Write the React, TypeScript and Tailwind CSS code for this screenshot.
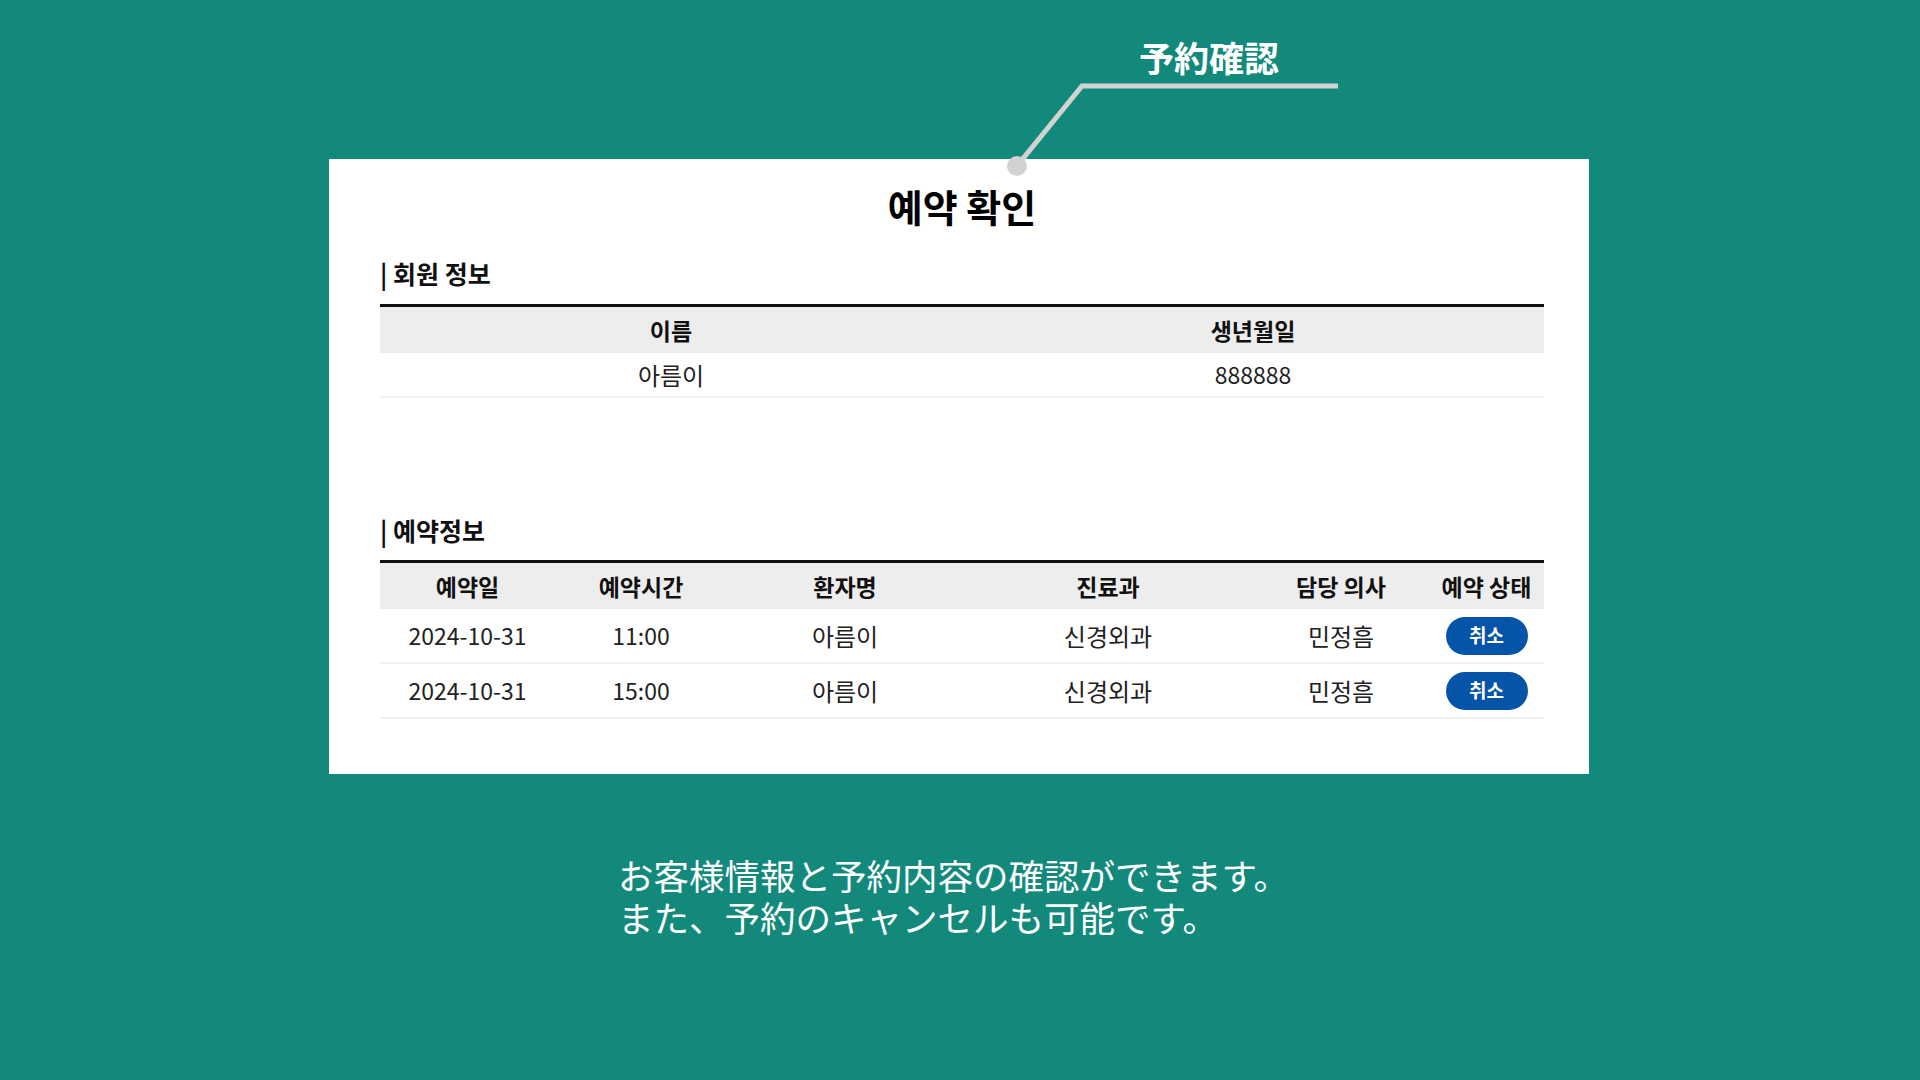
const memberCols = ["이름", "생년월일"];

const reservationCols = [
  { label: "예약일", w: "w-[175px]" },
  { label: "예약시간", w: "w-[172px]" },
  { label: "환자명", w: "w-[236px]" },
  { label: "진료과", w: "w-[290px]" },
  { label: "담당 의사", w: "w-[176px]" },
  { label: "예약 상태", w: "w-[115px]" },
];

const reservations = [
  { date: "2024-10-31", time: "11:00", name: "아름이", dept: "신경외과", doctor: "민정흠" },
  { date: "2024-10-31", time: "15:00", name: "아름이", dept: "신경외과", doctor: "민정흠" },
];

function SectionLabel({ children }: { children: string }) {
  return (
    <h2 className="text-[25px] leading-[30px] font-bold text-[#111]">| {children}</h2>
  );
}

export default function App() {
  return (
    <div className="relative h-[1080px] w-full overflow-hidden bg-[#13897c] font-['Noto_Sans_CJK_KR',sans-serif]">
      {/* callout */}
      <svg className="absolute left-0 top-0 z-10" width="1920" height="200" viewBox="0 0 1920 200">
        <polyline points="1017,166 1082,86 1338,86" fill="none" stroke="#d2d2d2" strokeWidth="5" />
        <circle cx="1017" cy="166" r="10" fill="#d2d2d2" />
      </svg>
      <p className="absolute left-[1139px] top-[37px] z-10 text-[35px] leading-[40px] font-bold text-white font-['Noto_Sans_CJK_JP',sans-serif]">
        予約確認
      </p>

      <div className="pt-[159px] pl-[329px]">
        <div className="h-[615px] w-[1260px] bg-white pl-[51px] pr-[45px] pt-[25px]">
          <h1 className="text-center text-[38px] leading-[44px] font-bold text-black">예약 확인</h1>

          <div className="mt-[30px]">
            <SectionLabel>회원 정보</SectionLabel>
            <div className="mt-[16px] border-t-[3px] border-[#111]">
              <div className="grid grid-cols-2 bg-[#ededed] h-[46px] items-center text-[23px] font-bold text-[#111]">
                {memberCols.map((c) => (
                  <div key={c} className="text-center">{c}</div>
                ))}
              </div>
              <div className="grid grid-cols-2 h-[45px] items-center border-b-2 border-[#f0f0f0] text-[24px] text-[#222]">
                <div className="text-center">아름이</div>
                <div className="text-center text-[23px]">888888</div>
              </div>
            </div>
          </div>

          <div className="mt-[117px]">
            <SectionLabel>예약정보</SectionLabel>
            <div className="mt-[15px] border-t-[3px] border-[#111]">
              <div className="flex h-[46px] items-center bg-[#ededed] text-[23px] font-bold text-[#111]">
                {reservationCols.map((c) => (
                  <div key={c.label} className={`${c.w} text-center`}>{c.label}</div>
                ))}
              </div>
              {reservations.map((r, i) => (
                <div key={i} className="flex h-[55px] items-center border-b-2 border-[#f0f0f0] text-[24px] text-[#222]">
                  <div className="w-[175px] text-center text-[23px]">{r.date}</div>
                  <div className="w-[172px] text-center text-[23px]">{r.time}</div>
                  <div className="w-[236px] text-center">{r.name}</div>
                  <div className="w-[290px] text-center">{r.dept}</div>
                  <div className="w-[176px] text-center">{r.doctor}</div>
                  <div className="flex w-[115px] justify-center">
                    <button className="h-[38px] w-[82px] rounded-full bg-[#0654a8] text-[19px] font-bold text-white">
                      취소
                    </button>
                  </div>
                </div>
              ))}
            </div>
          </div>
        </div>
      </div>

      <div className="mt-[80px] pl-[618px] text-[35.5px] leading-[42px] text-white font-['Noto_Sans_CJK_JP',sans-serif]">
        <p>お客様情報と予約内容の確認ができます。</p>
        <p>また、予約のキャンセルも可能です。</p>
      </div>
    </div>
  );
}
